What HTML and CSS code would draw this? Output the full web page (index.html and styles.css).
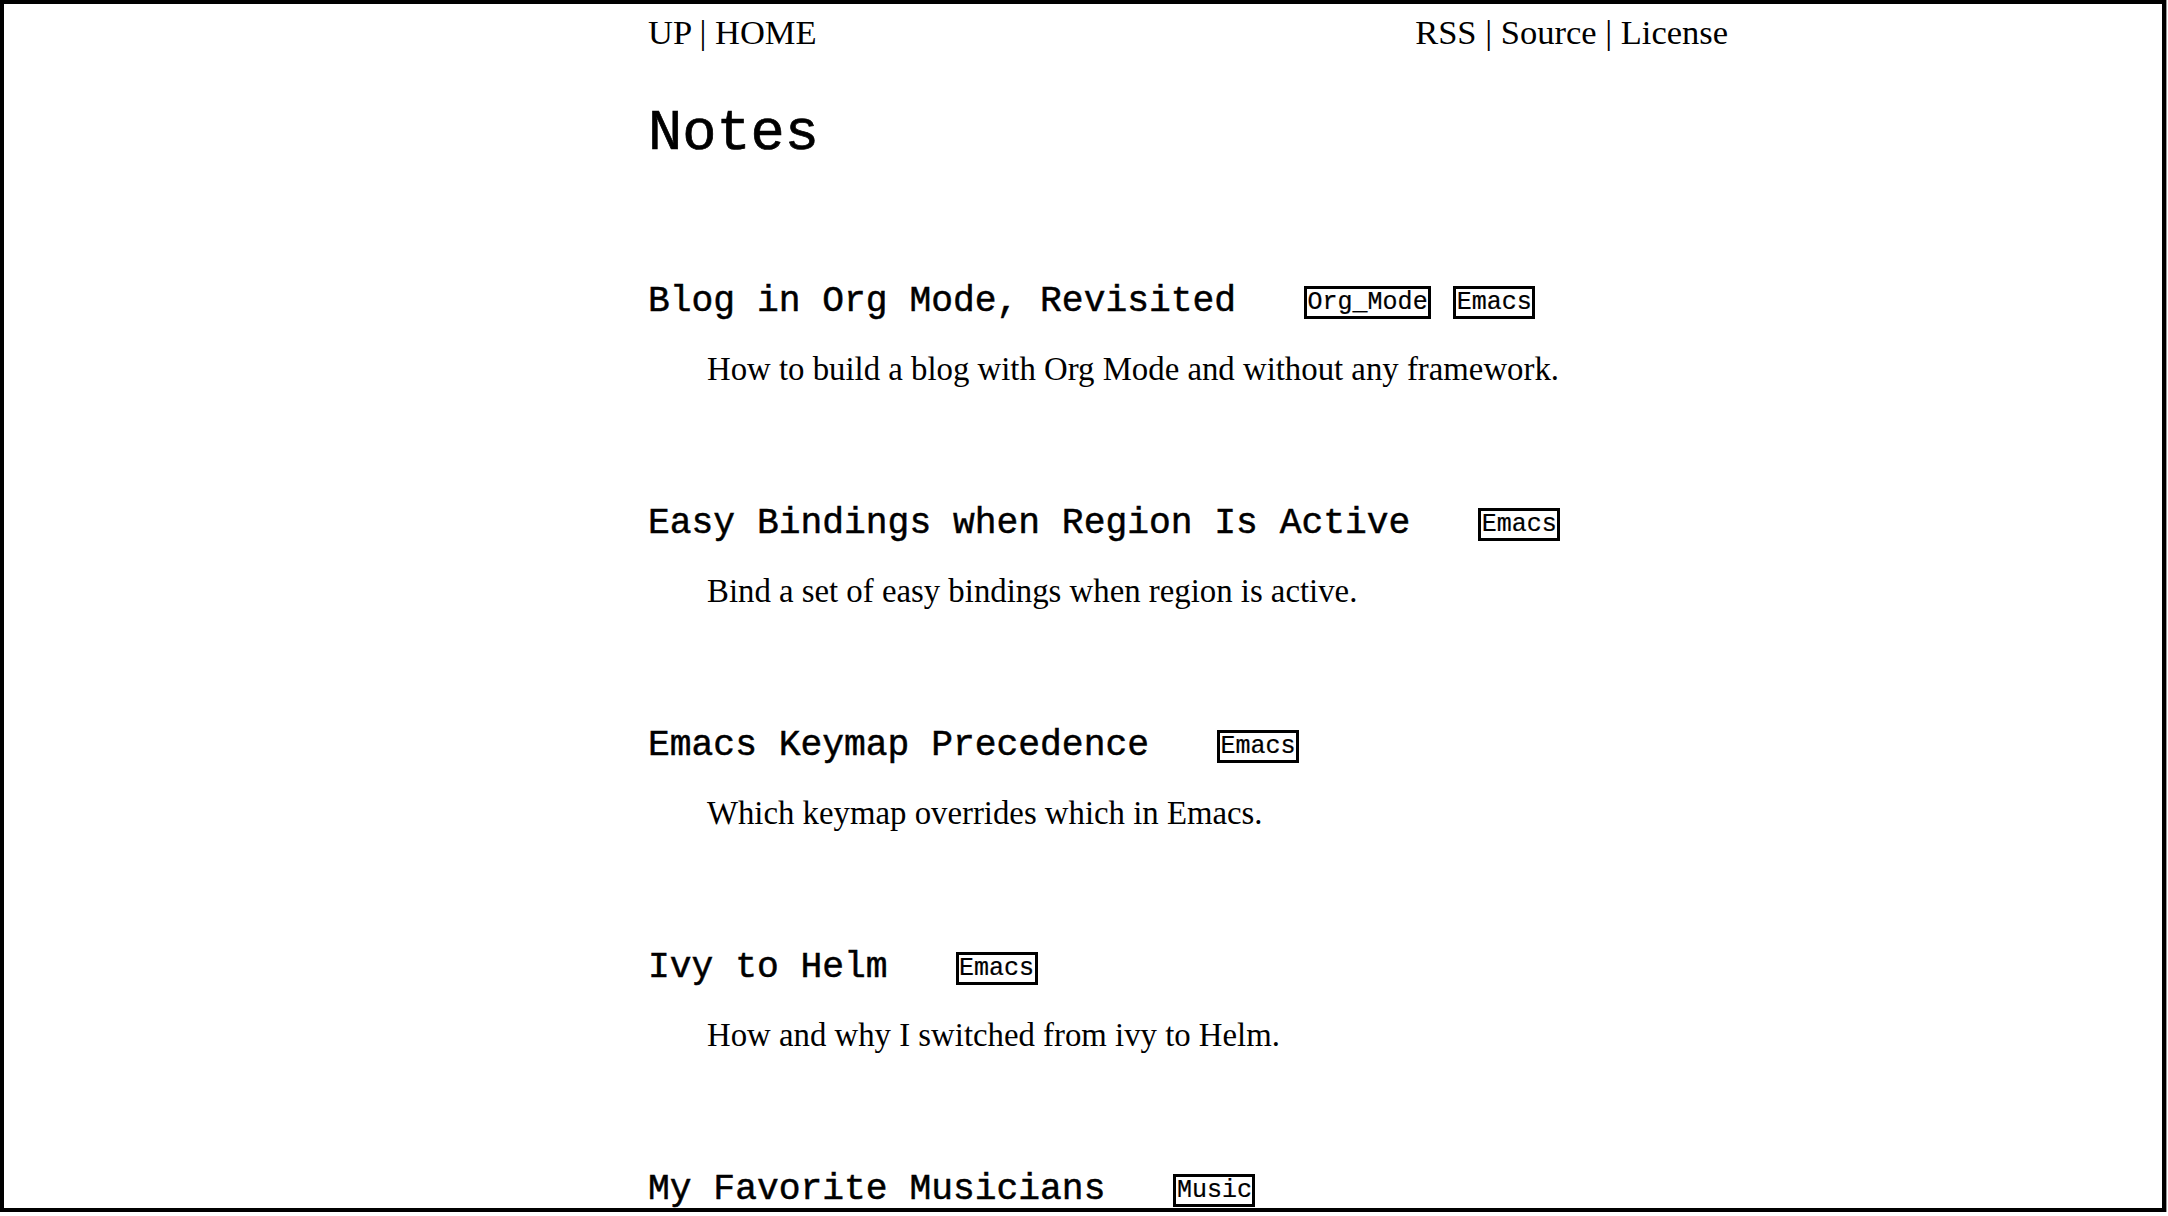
FILE: index.html
```html
<!DOCTYPE html>
<html lang="en">
<head>
<meta charset="utf-8">
<title>Notes</title>
<link rel="stylesheet" href="styles.css">
</head>
<body>
<div class="frame">
  <div class="page">
    <nav class="topnav">
      <div class="nav-left"><a href="#">UP</a> | <a href="#">HOME</a></div>
      <div class="nav-right"><a href="#">RSS</a> | <a href="#">Source</a> | <a href="#">License</a></div>
    </nav>
    <h1 class="title">Notes</h1>
    <div class="entries">
      <section class="entry">
        <h2 class="entry-head"><a href="#">Blog in Org Mode, Revisited</a><span class="tags"><span class="tag">Org_Mode</span><span class="tag">Emacs</span></span></h2>
        <p class="entry-desc">How to build a blog with Org Mode and without any framework.</p>
      </section>
      <section class="entry">
        <h2 class="entry-head"><a href="#">Easy Bindings when Region Is Active</a><span class="tags"><span class="tag">Emacs</span></span></h2>
        <p class="entry-desc">Bind a set of easy bindings when region is active.</p>
      </section>
      <section class="entry">
        <h2 class="entry-head"><a href="#">Emacs Keymap Precedence</a><span class="tags"><span class="tag">Emacs</span></span></h2>
        <p class="entry-desc">Which keymap overrides which in Emacs.</p>
      </section>
      <section class="entry">
        <h2 class="entry-head"><a href="#">Ivy to Helm</a><span class="tags"><span class="tag">Emacs</span></span></h2>
        <p class="entry-desc">How and why I switched from ivy to Helm.</p>
      </section>
      <section class="entry">
        <h2 class="entry-head"><a href="#">My Favorite Musicians</a><span class="tags"><span class="tag">Music</span></span></h2>
      </section>
    </div>
  </div>
</div>
</body>
</html>
```
FILE: styles.css
```css
html, body {
  margin: 0;
  padding: 0;
  background: #fff;
}

body {
  color: #000;
  font-family: "Liberation Serif", "Times New Roman", serif;
}

a {
  color: inherit;
  text-decoration: none;
}

.frame {
  box-sizing: border-box;
  width: 2166px;
  height: 1212px;
  border: 4px solid #000;
  box-shadow: 0 0 0 1px #9a9a9a;
  overflow: hidden;
}

.page {
  width: 1080px;
  margin-left: 644px;
  padding-top: 6px;
}

.topnav {
  display: flex;
  justify-content: space-between;
  font-size: 34.5px;
  line-height: 44px;
}

.title {
  margin: 48px 0 0 0;
  font-family: "Liberation Mono", "Courier New", monospace;
  font-size: 57px;
  line-height: 64px;
  font-weight: normal;
  -webkit-text-stroke: 0.7px #000;
}

.entries {
  margin-top: 114px;
  display: flex;
  flex-direction: column;
  gap: 111px;
}

.entry-head {
  margin: 0;
  display: flex;
  align-items: center;
  gap: 68px;
  font-family: "Liberation Mono", "Courier New", monospace;
  font-size: 36.3px;
  line-height: 44px;
  font-weight: normal;
  -webkit-text-stroke: 0.5px #000;
}

.tags {
  display: flex;
  gap: 22px;
  margin-top: 1px;
  -webkit-text-stroke: 0.2px #000;
}

.tag {
  border: 3px solid #000;
  font-family: "Liberation Mono", "Courier New", monospace;
  font-size: 25px;
  line-height: 27px;
  padding: 0 0.5px;
}

.entry-desc {
  margin: 23px 0 0 59px;
  font-size: 32.8px;
  line-height: 44px;
}
```
